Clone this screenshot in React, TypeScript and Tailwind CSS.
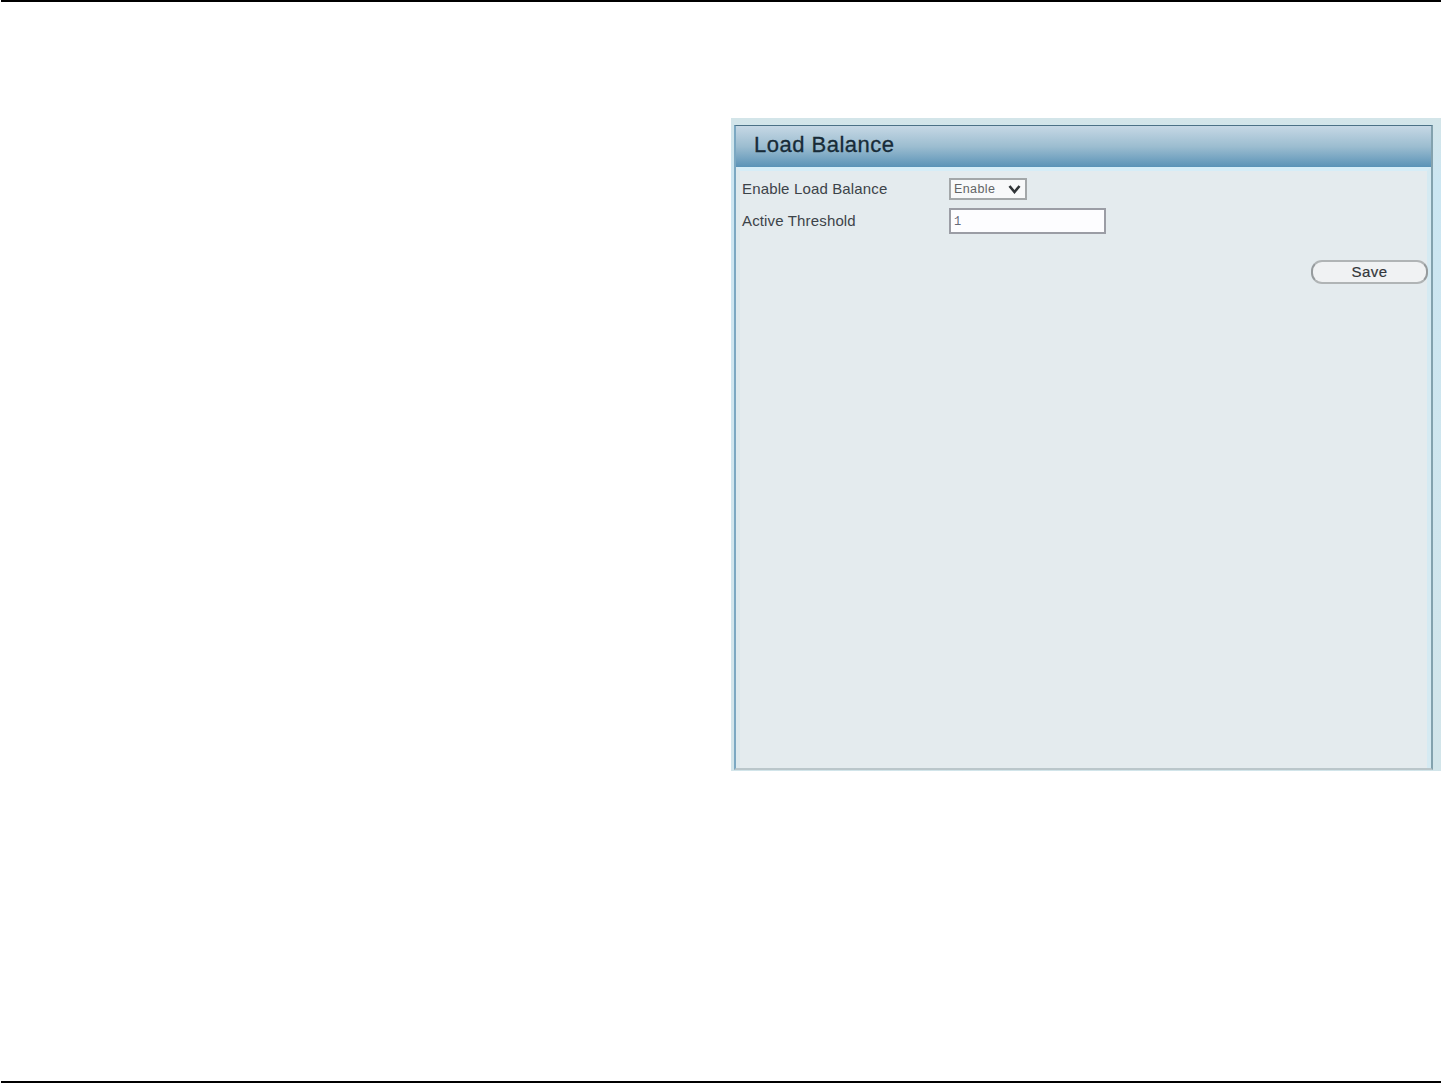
import { type ReactNode } from "react";

interface SettingRowProps {
  label: string;
  htmlFor: string;
  children: ReactNode;
}

function SettingRow({ label, htmlFor, children }: SettingRowProps) {
  return (
    <div className="flex h-8 items-center">
      <div className="w-[207px] shrink-0">
        <label
          htmlFor={htmlFor}
          className="block pb-px text-[15px] leading-4 tracking-[0.15px] whitespace-nowrap"
        >
          {label}
        </label>
      </div>
      {children}
    </div>
  );
}

function LoadBalancePanel() {
  return (
    <section className="flex h-[653px] w-[710px] flex-col bg-linear-to-b from-[#d3e5e9] via-[#cbe6f2] via-10% to-[#d2e5ea] pt-[7px] pr-2 pb-px pl-[3px] text-[#3c4349]">
      <div className="flex flex-1 flex-col border-t border-r-2 border-b-2 border-l-2 border-t-[#4b7186] border-r-[#83a2ae] border-b-[#bac6ca] border-l-[#7ba8c2] bg-[#e4ebee]">
        {/* Title bar */}
        <header className="flex h-[41px] items-center bg-linear-to-b from-[#c6d8e5] via-[#9cbdd0] to-[#5a93b7] pb-1 pl-[18px]">
          <h1 className="text-[22px] leading-6 tracking-[0.5px] text-[#172b38] [-webkit-text-stroke:0.3px_#172b38]">
            Load Balance
          </h1>
        </header>

        {/* Settings */}
        <div className="flex flex-1 flex-col border-t-4 border-r-4 border-l-4 border-t-[#d6edf7] border-r-[#d5eaf2] border-l-[#dde9ed] pt-[2px] pl-[2px]">
          <SettingRow label="Enable Load Balance" htmlFor="enable">
            <button
              id="enable"
              type="button"
              className="flex h-[22px] w-[78px] items-center justify-between border-2 border-[#a3a7a9] bg-[#f8f9fa] pr-1 pl-[3px] text-[12.5px] leading-4 tracking-[0.4px] text-[#626466]"
            >
              Enable
              <svg
                width="13"
                height="9"
                viewBox="0 0 13 9"
                fill="none"
                stroke="#303437"
                strokeWidth="2.6"
              >
                <path d="M1.5 1 6.5 7 11.5 1" />
              </svg>
            </button>
          </SettingRow>
          <SettingRow label="Active Threshold" htmlFor="threshold">
            <div
              id="threshold"
              className="flex h-[26px] w-[157px] items-center border-2 border-[#9b9da5] bg-[#fdfdff] pt-0.5 pl-[3px] font-['Liberation_Mono',monospace] text-[12px] text-[#666a78]"
            >
              1
            </div>
          </SettingRow>

          <div className="mt-[23px] flex justify-end">
            <button
              type="button"
              className="-mr-px h-6 w-[117px] rounded-[11px] border-2 border-[#b0b4b5] border-r-[#969b9d] border-l-[#969b9d] bg-[#f0f2f3] text-[15px] leading-4 tracking-[0.4px] text-[#33373a] [-webkit-text-stroke:0.2px_#33373a]"
            >
              Save
            </button>
          </div>
        </div>
      </div>
    </section>
  );
}

export default function App() {
  return (
    <div className="flex h-[1083px] w-[1441px] flex-col overflow-hidden bg-white pl-px font-['Liberation_Sans',Arial,sans-serif]">
      <div className="h-0.5 shrink-0 bg-black" />
      <main className="flex flex-1 items-start justify-end pt-[116px]">
        <LoadBalancePanel />
      </main>
      <div className="h-0.5 shrink-0 bg-black" />
    </div>
  );
}
